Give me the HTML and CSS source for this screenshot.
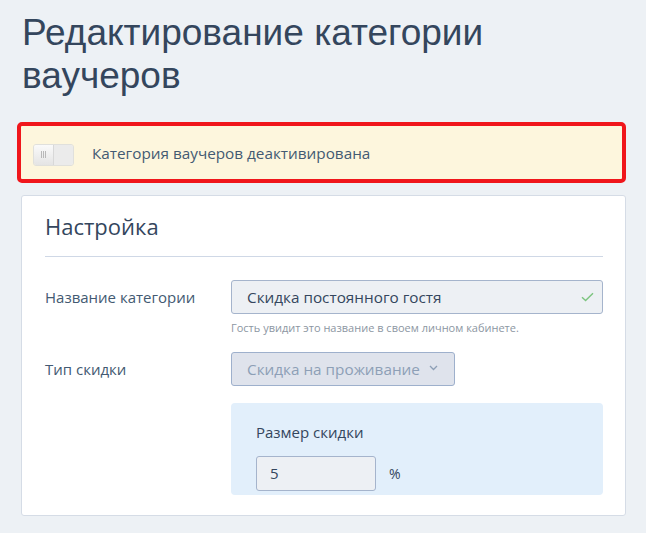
FILE: index.html
```html
<!DOCTYPE html>
<html lang="ru">
<head>
<meta charset="utf-8">
<title>Редактирование категории ваучеров</title>
<link rel="stylesheet" href="styles.css">
</head>
<body>
<div class="page">
  <h1 class="title">Редактирование категории ваучеров</h1>

  <div class="alert">
    <span class="toggle">
      <span class="toggle-knob"><span class="grip"></span></span>
      <span class="toggle-track"></span>
    </span>
    <span class="alert-text">Категория ваучеров деактивирована</span>
  </div>

  <section class="card">
    <h2 class="card-title">Настройка</h2>
    <hr class="divider">

    <div class="row">
      <div class="label">Название категории</div>
      <div class="field">
        <div class="input">
          <span>Скидка постоянного гостя</span>
          <svg class="check" width="13" height="10" viewBox="0 0 13 10"><path d="M1 5.2 L4.6 8.6 L12 1.2" fill="none" stroke="#7cc47f" stroke-width="1.4"/></svg>
        </div>
        <div class="hint">Гость увидит это название в своем личном кабинете.</div>
      </div>
    </div>

    <div class="row row-type">
      <div class="label">Тип скидки</div>
      <div class="field">
        <div class="select">
          <span>Скидка на проживание</span>
          <svg class="chev" width="9" height="6" viewBox="0 0 9 6"><path d="M1 1 L4.5 4.5 L8 1" fill="none" stroke="#8d9fb6" stroke-width="1.3"/></svg>
        </div>
        <div class="panel">
          <div class="panel-label">Размер скидки</div>
          <div class="panel-row">
            <div class="small-input">5</div>
            <span class="unit">%</span>
          </div>
        </div>
      </div>
    </div>
  </section>
</div>
</body>
</html>
```

FILE: styles.css
```css
* { box-sizing: border-box; }

html, body {
  margin: 0;
  padding: 0;
  background: #edf1f5;
}

body {
  font-family: "Open Sans", "Noto Sans", sans-serif;
  color: #34465d;
}

.page {
  padding: 11px 20px 0 17px;
}

.title {
  margin: 0 0 25px 5px;
  font-family: "Liberation Sans", Arial, sans-serif;
  font-weight: normal;
  font-size: 37px;
  line-height: 43px;
  color: #34465d;
  width: 540px;
}

.alert {
  width: 609px;
  height: 61px;
  border: 4px solid #f0161b;
  border-radius: 5px;
  background: #fdf6dd;
  display: flex;
  align-items: center;
  padding: 4px 12px 0 12px;
}

.toggle {
  display: flex;
  width: 41px;
  height: 22px;
  border-radius: 3px;
  overflow: hidden;
  border: 1px solid #e0e0dc;
}

.toggle-knob {
  width: 20px;
  height: 100%;
  background: linear-gradient(#fafafa, #e4e4e4);
  border-right: 1px solid #d8d8d8;
  display: flex;
  align-items: center;
  justify-content: center;
}

.grip {
  width: 5px;
  height: 7px;
  background: repeating-linear-gradient(90deg, #b8b8b8 0 1px, transparent 1px 2px);
}

.toggle-track {
  flex: 1;
  background: #ebebeb;
}

.alert-text {
  margin-left: 18px;
  margin-top: -3px;
  font-size: 15.3px;
  color: #435a72;
}

.card {
  margin: 12px 0 0 4px;
  width: 605px;
  background: #fff;
  border: 1px solid #d5dce6;
  border-radius: 3px;
  padding: 15px 22px 20px 23px;
}

.card-title {
  margin: 0;
  font-weight: normal;
  font-size: 22px;
  line-height: 30px;
  color: #34465d;
}

.divider {
  margin: 15px 0 23px 0;
  border: 0;
  border-top: 1px solid #cfd8e6;
}

.row {
  display: grid;
  grid-template-columns: 186px 1fr;
}

.row-type {
  margin-top: 17px;
}

.label {
  font-size: 15px;
  line-height: 20px;
  padding-top: 7px;
  color: #435a72;
}

.input {
  height: 34px;
  border: 1px solid #a5b4cc;
  border-radius: 3px;
  background: #edf0f4;
  display: flex;
  align-items: center;
  justify-content: space-between;
  padding: 0 8px 0 15px;
  font-size: 15.3px;
  color: #34465d;
}

.check { display: block; }

.hint {
  margin-top: 6px;
  font-size: 11px;
  line-height: 15px;
  color: #8c96a2;
}

.select {
  display: inline-flex;
  align-items: center;
  width: 224px;
  height: 34px;
  border: 1px solid #9eb0cc;
  border-radius: 3px;
  background: #dfe3ec;
  padding: 0 0 0 15px;
  font-size: 15.3px;
  color: #8d9fb6;
}

.chev { margin-left: 9px; margin-top: -2px; }

.panel {
  margin-top: 17px;
  height: 92px;
  background: #e2effb;
  border-radius: 4px;
  padding: 19px 25px 4px 25px;
}

.panel-label {
  font-size: 15px;
  line-height: 20px;
  color: #34465d;
}

.panel-row {
  margin-top: 14px;
  display: flex;
  align-items: center;
}

.small-input {
  width: 120px;
  height: 35px;
  border: 1px solid #a5b4cc;
  border-radius: 3px;
  background: #edf0f4;
  padding-left: 13px;
  font-size: 15px;
  line-height: 33px;
  color: #34465d;
}

.unit {
  margin-left: 13px;
  font-size: 14px;
  color: #34465d;
}
```
